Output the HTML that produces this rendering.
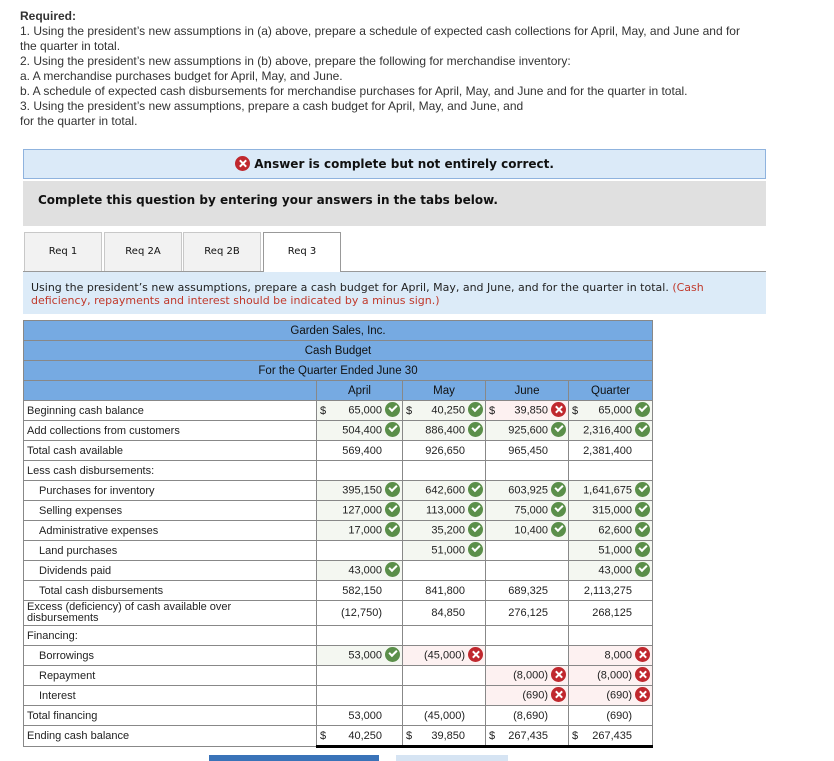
<!DOCTYPE html>
<html><head><meta charset="utf-8"><style>
*{box-sizing:border-box;margin:0;padding:0}
body{width:834px;height:759px;background:#fff;font-family:"Liberation Sans",Arial,sans-serif;position:relative;overflow:hidden;color:#222}
.req{position:absolute;left:20px;top:9px;font-size:12px;line-height:15px;color:#333;width:800px}
.box{position:absolute;left:23px;width:743px}
.ans{top:149px;height:30px;background:#dbeaf8;border:1px solid #8fb3de;font-family:"DejaVu Sans",sans-serif;font-weight:bold;font-size:12px;text-align:center;line-height:28px;color:#111}
.gray{top:181px;height:45px;background:#e0e0e0;font-family:"DejaVu Sans",sans-serif;font-weight:bold;font-size:12px;line-height:38px;padding-left:15px;color:#111}
.tab{position:absolute;top:232px;height:39px;width:78px;background:#f2f2f2;border:1px solid #c8c8c8;border-bottom:none;font-family:"DejaVu Sans",sans-serif;font-size:10px;text-align:center;line-height:38px;color:#111}
.inst{top:271px;height:43px;background:#dcebf8;border-top:1px solid #999;font-family:"DejaVu Sans",sans-serif;font-size:11px;line-height:13px;padding:9px 0 0 8px;color:#222}
.ic{display:inline-block;width:15px;height:15px;border-radius:50%;vertical-align:middle;position:relative;top:-1px}
.ok{background:#5b8f4a}.bad{background:#c0282e}
.ok::after{content:"";position:absolute;left:4px;top:3px;width:6px;height:3px;border-left:2px solid #fff;border-bottom:2px solid #fff;transform:rotate(-45deg)}
.bad::before,.bad::after{content:"";position:absolute;left:7px;top:3px;width:2px;height:9px;background:#fff;transform:rotate(45deg)}
.bad::after{transform:rotate(-45deg)}
table{position:absolute;left:23px;top:320px;border-collapse:collapse;font-size:11px;table-layout:fixed}
td{border:1px solid #888;height:20px;padding:0;color:#222}
tr.h td{background:#76aae2;text-align:center;font-size:11.5px;color:#111}
td.l{padding-left:3px}
td.i{padding-left:15px}
td.n{text-align:right;padding-right:20px;position:relative}
td.n .ic{margin-left:3px;margin-right:-18px}
td.g{background:#f4f7f1}
td.p{background:#fdf1f1}
.d{position:absolute;left:3px;top:4px}
tr.t td.n{border-top:1.5px solid #000}
tr.e td.n{border-bottom:3px solid #000}
</style></head><body>
<div class="req"><b>Required:</b><br>1. Using the president’s new assumptions in (a) above, prepare a schedule of expected cash collections for April, May, and June and for<br>the quarter in total.<br>2. Using the president’s new assumptions in (b) above, prepare the following for merchandise inventory:<br>a. A merchandise purchases budget for April, May, and June.<br>b. A schedule of expected cash disbursements for merchandise purchases for April, May, and June and for the quarter in total.<br>3. Using the president’s new assumptions, prepare a cash budget for April, May, and June, and<br>for the quarter in total.</div>
<div class="box ans"><span class="ic bad"></span> Answer is complete but not entirely correct.</div>
<div class="box gray">Complete this question by entering your answers in the tabs below.</div>
<div class="tab" style="left:24px">Req 1</div>
<div class="tab" style="left:104px">Req 2A</div>
<div class="tab" style="left:183px">Req 2B</div>
<div class="tab" style="left:263px;background:#fff;border-color:#999;z-index:2;height:40px">Req 3</div>
<div class="box inst">Using the president’s new assumptions, prepare a cash budget for April, May, and June, and for the quarter in total. <span style="color:#c0392b">(Cash deficiency, repayments and interest should be indicated by a minus sign.)</span></div>
<table>
<colgroup><col style="width:293px"><col style="width:86px"><col style="width:83px"><col style="width:83px"><col style="width:84px"></colgroup>
<tr class="h"><td colspan="5">Garden Sales, Inc.</td></tr>
<tr class="h"><td colspan="5">Cash Budget</td></tr>
<tr class="h"><td colspan="5">For the Quarter Ended June 30</td></tr>
<tr class="h"><td></td><td>April</td><td>May</td><td>June</td><td>Quarter</td></tr>
<tr><td class="l">Beginning cash balance</td><td class="n g"><span class="d">$</span>65,000<span class="ic ok"></span></td><td class="n g"><span class="d">$</span>40,250<span class="ic ok"></span></td><td class="n p"><span class="d">$</span>39,850<span class="ic bad"></span></td><td class="n g"><span class="d">$</span>65,000<span class="ic ok"></span></td></tr>
<tr><td class="l">Add collections from customers</td><td class="n g">504,400<span class="ic ok"></span></td><td class="n g">886,400<span class="ic ok"></span></td><td class="n g">925,600<span class="ic ok"></span></td><td class="n g">2,316,400<span class="ic ok"></span></td></tr>
<tr class="t"><td class="l">Total cash available</td><td class="n">569,400</td><td class="n">926,650</td><td class="n">965,450</td><td class="n">2,381,400</td></tr>
<tr class="t"><td class="l">Less cash disbursements:</td><td class="n"></td><td class="n"></td><td class="n"></td><td class="n"></td></tr>
<tr><td class="i">Purchases for inventory</td><td class="n g">395,150<span class="ic ok"></span></td><td class="n g">642,600<span class="ic ok"></span></td><td class="n g">603,925<span class="ic ok"></span></td><td class="n g">1,641,675<span class="ic ok"></span></td></tr>
<tr><td class="i">Selling expenses</td><td class="n g">127,000<span class="ic ok"></span></td><td class="n g">113,000<span class="ic ok"></span></td><td class="n g">75,000<span class="ic ok"></span></td><td class="n g">315,000<span class="ic ok"></span></td></tr>
<tr><td class="i">Administrative expenses</td><td class="n g">17,000<span class="ic ok"></span></td><td class="n g">35,200<span class="ic ok"></span></td><td class="n g">10,400<span class="ic ok"></span></td><td class="n g">62,600<span class="ic ok"></span></td></tr>
<tr><td class="i">Land purchases</td><td class="n"></td><td class="n g">51,000<span class="ic ok"></span></td><td class="n"></td><td class="n g">51,000<span class="ic ok"></span></td></tr>
<tr><td class="i">Dividends paid</td><td class="n g">43,000<span class="ic ok"></span></td><td class="n"></td><td class="n"></td><td class="n g">43,000<span class="ic ok"></span></td></tr>
<tr class="t"><td class="i">Total cash disbursements</td><td class="n">582,150</td><td class="n">841,800</td><td class="n">689,325</td><td class="n">2,113,275</td></tr>
<tr class="t"><td class="l" style="height:25px;line-height:11px"><div style="width:215px">Excess (deficiency) of cash available over disbursements</div></td><td class="n">(12,750)</td><td class="n">84,850</td><td class="n">276,125</td><td class="n">268,125</td></tr>
<tr class="t"><td class="l">Financing:</td><td class="n"></td><td class="n"></td><td class="n"></td><td class="n"></td></tr>
<tr><td class="i">Borrowings</td><td class="n g">53,000<span class="ic ok"></span></td><td class="n p">(45,000)<span class="ic bad"></span></td><td class="n"></td><td class="n p">8,000<span class="ic bad"></span></td></tr>
<tr><td class="i">Repayment</td><td class="n"></td><td class="n"></td><td class="n p">(8,000)<span class="ic bad"></span></td><td class="n p">(8,000)<span class="ic bad"></span></td></tr>
<tr><td class="i">Interest</td><td class="n"></td><td class="n"></td><td class="n p">(690)<span class="ic bad"></span></td><td class="n p">(690)<span class="ic bad"></span></td></tr>
<tr><td class="l">Total financing</td><td class="n">53,000</td><td class="n">(45,000)</td><td class="n">(8,690)</td><td class="n">(690)</td></tr>
<tr class="e"><td class="l" style="height:21px">Ending cash balance</td><td class="n"><span class="d">$</span>40,250</td><td class="n"><span class="d">$</span>39,850</td><td class="n"><span class="d">$</span>267,435</td><td class="n"><span class="d">$</span>267,435</td></tr>
</table>
<div style="position:absolute;left:209px;top:755px;width:170px;height:6px;background:#3a73b8"></div>
<div style="position:absolute;left:396px;top:755px;width:112px;height:6px;background:#d6e4f3"></div>
</body></html>
